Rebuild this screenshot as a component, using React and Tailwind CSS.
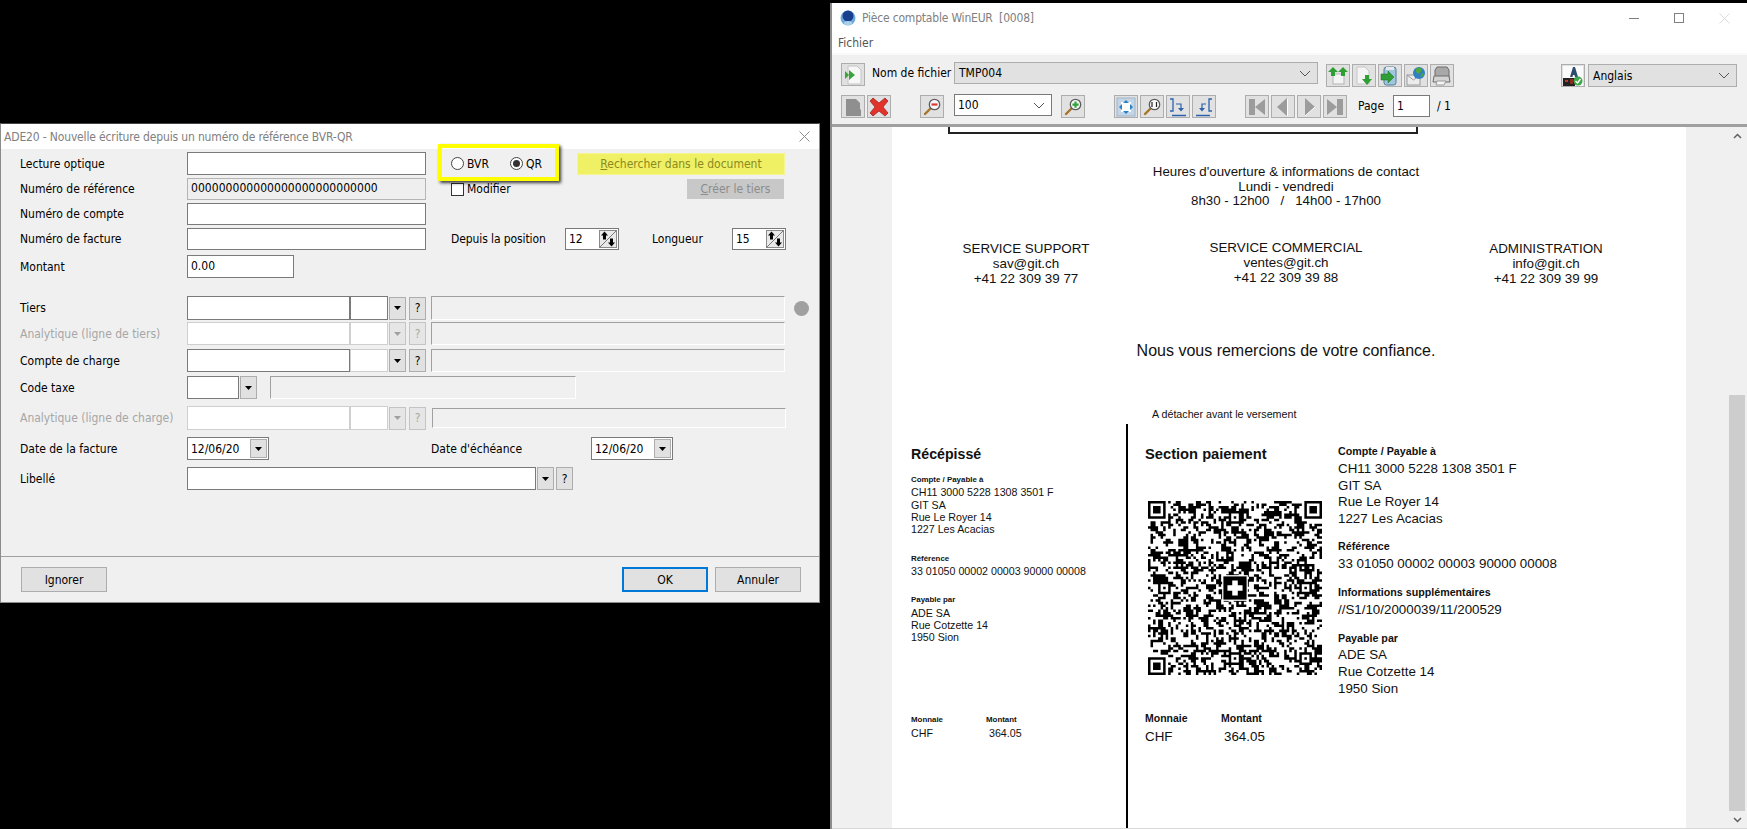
import React from "react";

// pseudo-random QR matrix, 69 modules
function buildQr() {
  const n = 69;
  let seed = 7331;
  const next = () => {
    seed = (seed * 1103515245 + 12345) & 0x7fffffff;
    return (seed >> 12) % 100;
  };
  const m = [];
  for (let y = 0; y < n; y++) {
    const row = [];
    for (let x = 0; x < n; x++) {
      const prev = x > 0 ? row[x - 1] : 0;
      const up = y > 0 ? m[y - 1][x] : 0;
      row.push(next() < 34 + prev * 13 + up * 13 ? 1 : 0);
    }
    m.push(row);
  }
  const put = (ox, oy, size, fn) => {
    for (let y = 0; y < size; y++) for (let x = 0; x < size; x++) m[oy + y][ox + x] = fn(x, y);
  };
  const finder = (x, y) => {
    const d = Math.max(Math.abs(x - 3), Math.abs(y - 3));
    return d === 3 || d <= 1 ? 1 : 0;
  };
  const align = (x, y) => {
    const d = Math.max(Math.abs(x - 2), Math.abs(y - 2));
    return d === 2 || d === 0 ? 1 : 0;
  };
  [[6, 34], [34, 6], [34, 62], [62, 34], [34, 34], [62, 62], [62, 6], [6, 62]].forEach(([cx, cy]) => {
    if ((cx < 10 && cy < 10) || (cx > 60 && cy < 10) || (cx < 10 && cy > 60)) return;
    put(cx - 2, cy - 2, 5, align);
  });
  put(0, 0, 8, () => 0);
  put(n - 8, 0, 8, () => 0);
  put(0, n - 8, 8, () => 0);
  put(0, 0, 7, finder);
  put(n - 7, 0, 7, finder);
  put(0, n - 7, 7, finder);
  let d = "";
  for (let y = 0; y < n; y++) for (let x = 0; x < n; x++) if (m[y][x]) d += `M${x} ${y}h1v1h-1z`;
  return d;
}
const qrPath = buildQr();

function QrCode() {
  return (
    <svg viewBox="0 0 69 69" className="w-[176px] h-[174px] block ml-[2px] blur-[0.3px]">
      <path d={qrPath} fill="#000" />
      <rect x="29.4" y="29.4" width="10.2" height="10.2" fill="#fff" />
      <rect x="29.9" y="29.9" width="9.2" height="9.2" fill="#000" />
      <path d="M33.4 31.5h2.2v1.900h1.900v2.200h-1.900v1.900h-2.200v-1.900h-1.900v-2.200h1.900z" fill="#fff" />
    </svg>
  );
}

function Caret({ dim }) {
  return (
    <svg width="7" height="4" viewBox="0 0 7 4">
      <path d="M0 0h7L3.5 4z" fill={dim ? "#a0a0a0" : "#000"} />
    </svg>
  );
}

function Chevron() {
  return (
    <svg width="12" height="7" viewBox="0 0 12 7" className="shrink-0">
      <path d="M1 1l5 5 5-5" fill="none" stroke="#555" strokeWidth="1" />
    </svg>
  );
}

function SmallBtn({ dim, children, className = "" }) {
  return (
    <div className={`w-[17px] h-[23px] border flex items-center justify-center ${dim ? "bg-[#e6e6e6] border-[#c4c4c4] text-[#a6a6a6]" : "bg-[#e1e1e1] border-[#adadad]"} ${className}`}>
      {children}
    </div>
  );
}

function Input({ className = "", children }) {
  return (
    <div className={`bg-white border border-[#7a7a7a] pl-[3px] leading-[20px] h-full ${className}`}>{children}</div>
  );
}

function Sunken({ className = "" }) {
  return <div className={`border border-t-[#a0a0a0] border-l-[#a0a0a0] border-r-white border-b-white h-full ${className}`} />;
}

function Row({ mt, h, label, dim, children }) {
  return (
    <div className={`flex items-center ${mt} ${h}`}>
      <div className={`w-[186px] pl-[19px] shrink-0 ${dim ? "text-[#a6a6a6]" : ""}`}>{label}</div>
      {children}
    </div>
  );
}

function Lookup({ dim, first }) {
  const line = dim ? "border-[#cfcfcf]" : "border-[#7a7a7a]";
  return (
    <>
      <div className={`w-[163px] h-full bg-white border ${line}`} />
      <div className={`w-[38px] h-full bg-white border ${first ? "border-[#7a7a7a]" : "border-[#cfcfcf]"}`} />
      <SmallBtn dim={dim} className="ml-[1px]"><Caret dim={dim} /></SmallBtn>
      <SmallBtn dim={dim} className="ml-[3px]">?</SmallBtn>
    </>
  );
}

function DateField({ className = "" }) {
  return (
    <div className={`w-[82px] h-full bg-white border border-[#7a7a7a] flex items-center pl-[3px] justify-between pr-[1px] ${className}`}>
      <span>12/06/20</span>
      <div className="w-[17px] h-[19px] bg-[#e1e1e1] border border-[#adadad] flex items-center justify-center"><Caret /></div>
    </div>
  );
}

function Spin({ value, className = "" }) {
  return (
    <div className={`w-[54px] h-full bg-white border border-[#7a7a7a] flex items-center pl-[3px] justify-between pr-[1px] ${className}`}>
      <span>{value}</span>
      <svg width="18" height="18" viewBox="0 0 18 18">
        <rect x="0.5" y="0.5" width="17" height="17" fill="#e9e9e9" stroke="#8a8a8a" />
        <path d="M0.5 17.5L17.5 0.5" stroke="#777" />
        <path d="M5.5 1.5L9 5.5H7v4H4v-4H2z" fill="#000" />
        <path d="M12.5 16.5L9 12.5h2v-4h3v4h2z" fill="#000" />
      </svg>
    </div>
  );
}

function DialogButton({ children, className = "" }) {
  return (
    <div className={`w-[86px] h-[25px] bg-[#e1e1e1] border border-[#adadad] flex items-center justify-center ${className}`}>{children}</div>
  );
}

function Dialog() {
  return (
    <div className="absolute left-0 top-[123px] w-[820px] h-[480px] bg-[#f0f0f0] border border-[#8c8c8c] border-t-[#444] flex flex-col text-[12px] text-black font-['DejaVu_Sans_Condensed','Noto_Sans',sans-serif]">
      <div className="h-[25px] bg-white flex items-center justify-between pl-[3px] pr-[9px] text-[#808080] shrink-0 tracking-[-0.15px]">
        <span>ADE20 - Nouvelle écriture depuis un numéro de référence BVR-QR</span>
        <svg width="11" height="11" viewBox="0 0 11 11"><path d="M0.5 0.5l10 10M10.5 0.5l-10 10" stroke="#8c8c8c" /></svg>
      </div>

      <div className="flex-1 flex flex-col pt-[3px]">
        <Row mt="" h="h-[23px]" label="Lecture optique">
          <Input className="w-[239px]" />
          <div className="ml-[25px] flex items-center w-[126px]">
            <span className="w-[13px] h-[13px] rounded-full border border-[#444] bg-white" />
            <span className="ml-[3px] w-[43px]">BVR</span>
            <span className="w-[13px] h-[13px] rounded-full border border-[#444] bg-white flex items-center justify-center">
              <span className="w-[7px] h-[7px] rounded-full bg-[#333]" />
            </span>
            <span className="ml-[3px]">QR</span>
          </div>
          <div className="w-[208px] h-[22px] bg-[#f0f064] border border-[#f5f590] flex items-center justify-center text-[#8a8a1e]"><span><u>R</u>echercher dans le document</span></div>
        </Row>
        <Row mt="mt-[3px]" h="h-[22px]" label="Numéro de référence">
          <div className="w-[239px] h-full border border-[#b4b4b4] bg-[#efefef] pl-[3px] leading-[19px] tracking-[0.05px]">000000000000000000000000000</div>
          <div className="ml-[25px] flex items-center w-[236px]">
            <span className="w-[13px] h-[13px] border border-[#333] bg-white" />
            <span className="ml-[3px]">Modifier</span>
          </div>
          <div className="w-[97px] h-[20px] bg-[#c8c8c8] flex items-center justify-center text-[#8c8c8c]"><span><u>C</u>réer le tiers</span></div>
        </Row>
        <Row mt="mt-[3px]" h="h-[22px]" label="Numéro de compte">
          <Input className="w-[239px]" />
        </Row>
        <Row mt="mt-[3px]" h="h-[22px]" label="Numéro de facture">
          <Input className="w-[239px]" />
          <span className="ml-[25px] w-[114px] tracking-[-0.1px]">Depuis la position</span>
          <Spin value="12" />
          <span className="ml-[33px] w-[80px]">Longueur</span>
          <Spin value="15" />
        </Row>
        <Row mt="mt-[5px]" h="h-[23px]" label="Montant">
          <Input className="w-[107px]">0.00</Input>
        </Row>

        <Row mt="mt-[18px]" h="h-[24px]" label="Tiers">
          <Lookup first />
          <Sunken className="ml-[5px] w-[354px]" />
          <span className="ml-[9px] w-[15px] h-[15px] rounded-full bg-[#a0a0a0]" />
        </Row>
        <Row mt="mt-[2px]" h="h-[23px]" label="Analytique (ligne de tiers)" dim>
          <Lookup dim />
          <Sunken className="ml-[5px] w-[354px]" />
        </Row>
        <Row mt="mt-[4px]" h="h-[23px]" label="Compte de charge">
          <Lookup />
          <Sunken className="ml-[5px] w-[354px]" />
        </Row>
        <Row mt="mt-[4px]" h="h-[23px]" label="Code taxe">
          <div className="w-[52px] h-full bg-white border border-[#7a7a7a]" />
          <SmallBtn className="ml-[1px]"><Caret /></SmallBtn>
          <Sunken className="ml-[13px] w-[306px]" />
        </Row>
        <Row mt="mt-[7px]" h="h-[24px]" label="Analytique (ligne de charge)" dim>
          <Lookup dim />
          <Sunken className="ml-[6px] w-[354px] !h-[20px]" />
        </Row>
        <Row mt="mt-[7px]" h="h-[23px]" label="Date de la facture">
          <DateField />
          <span className="ml-[162px] w-[160px]">Date d'échéance</span>
          <DateField />
        </Row>
        <Row mt="mt-[7px]" h="h-[23px]" label="Libellé">
          <Input className="w-[349px]" />
          <SmallBtn className="ml-[1px]"><Caret /></SmallBtn>
          <SmallBtn className="ml-[2px]">?</SmallBtn>
        </Row>
      </div>

      <div className="h-[46px] border-t border-[#a0a0a0] flex items-start pt-[10px] pl-[20px] pr-[18px] shrink-0">
        <DialogButton>Ignorer</DialogButton>
        <DialogButton className="ml-auto !border-2 !border-[#0078d7]">OK</DialogButton>
        <DialogButton className="ml-[7px]">Annuler</DialogButton>
      </div>

      {/* annotation frame drawn over the dialog */}
      <div className="absolute left-[437px] top-[20px] w-[121px] h-[37px] border-[4px] border-[#ffff00] shadow-[2px_2px_3px_rgba(0,0,0,0.75)]" />
    </div>
  );
}

function ToolBtn({ children, className = "", w = "w-[24px]" }) {
  return (
    <div className={`${w} h-[23px] bg-[#e1e1e1] border border-[#adadad] flex items-center justify-center shrink-0 ${className}`}>{children}</div>
  );
}

const Ic = ({ children }) => <svg width="20" height="20" viewBox="0 0 20 20">{children}</svg>;

const Handle = () => <path d="M9 11l-6 6" stroke="#a8742a" strokeWidth="2.4" strokeLinecap="round" />;
const Lens = () => <circle cx="12.5" cy="7.5" r="5.2" fill="#fafafa" stroke="#5c5c5c" strokeWidth="1.3" />;

const icons = {
  openDoc: (
    <Ic>
      <path d="M5 1h9l4 4v14H5z" fill="#f7f7f7" stroke="#c4c4c4" />
      <path d="M2 6l4 4-4 4zM6 5l6 5-6 5z" fill="#3aa43a" />
    </Ic>
  ),
  grayDoc: (
    <Ic>
      <path d="M3 2h10l4 4v6l1 1v6H3z" fill="#8f8f8f" />
    </Ic>
  ),
  del: (
    <Ic>
      <path d="M4 1l6 5 6-5 3 3-5 6 5 6-3 3-6-5-6 5-3-3 5-6-5-6z" fill="#e2332b" stroke="#9e2b26" strokeWidth="0.8" />
    </Ic>
  ),
  zoomOut: (
    <Ic>
      <Handle />
      <Lens />
      <rect x="9.5" y="6.4" width="6" height="2.2" fill="#d93a32" />
    </Ic>
  ),
  zoomIn: (
    <Ic>
      <Handle />
      <Lens />
      <path d="M11.4 4.5h2.2v2h2v2.2h-2v2h-2.2v-2h-2V6.500h2z" fill="#2fa53a" />
    </Ic>
  ),
  fit: (
    <Ic>
      <rect x="1" y="1" width="18" height="18" fill="#c4d6e6" stroke="#9db4c8" />
      <rect x="5" y="5" width="10" height="10" fill="#fff" />
      <path d="M10 3l3 3H7zM10 17l-3-3h6zM3 10l3-3v6zM17 10l-3 3V7z" fill="#2a82c4" />
    </Ic>
  ),
  actual: (
    <Ic>
      <Handle />
      <Lens />
      <path d="M10 5v5M12.500 6v0M12.500 8.500v0M14.500 5v5" stroke="#222" strokeWidth="1.200" />
    </Ic>
  ),
  cropRight: (
    <Ic>
      <path d="M2 2h3v12H2M4 18.500h14" fill="none" stroke="#2c62ad" strokeWidth="1.300" />
      <path d="M8 7h5v5" fill="none" stroke="#2c62ad" strokeWidth="1.200" />
      <path d="M10 11h6l-3 3.500z" fill="#2c62ad" />
    </Ic>
  ),
  cropLeft: (
    <Ic>
      <path d="M18 2h-3v12h3M2 18.500h14" fill="none" stroke="#2c62ad" strokeWidth="1.300" />
      <path d="M12 7H8v5" fill="none" stroke="#2c62ad" strokeWidth="1.200" />
      <path d="M5 11h6l-3 3.500z" fill="#2c62ad" />
    </Ic>
  ),
  first: (
    <Ic>
      <path d="M2 2h6v16H2zM8 10l10-8v16z" fill="#9c9c9c" />
    </Ic>
  ),
  prev: (
    <Ic>
      <path d="M4 10l10-9v18z" fill="#9c9c9c" />
      <path d="M14.500 2v17" stroke="#fff" />
    </Ic>
  ),
  next: (
    <Ic>
      <path d="M16 10L6 1v18z" fill="#9c9c9c" />
      <path d="M16 10L6 19" stroke="#fff" />
    </Ic>
  ),
  last: (
    <Ic>
      <path d="M18 2h-6v16h6zM12 10L2 2v16z" fill="#9c9c9c" />
    </Ic>
  ),
  upload: (
    <Ic>
      <rect x="5" y="8" width="11" height="10" fill="#f4f4f4" stroke="#b5b5b5" />
      <path d="M5 1l5 5H7v4H3V6H0zM15 1l5 5h-3v4h-4V6h-3z" fill="#2f9e35" />
    </Ic>
  ),
  download: (
    <Ic>
      <path d="M3 1h8l4 4v13H3z" fill="#f4f4f4" stroke="#c6c6c6" />
      <path d="M11 9h4v4h3l-5 6-5-6h3z" fill="#2f9e35" />
    </Ic>
  ),
  jar: (
    <Ic>
      <rect x="4" y="1" width="12" height="18" rx="2.500" fill="#9fc6dc" stroke="#4d7f9c" />
      <rect x="6" y="1" width="8" height="3" fill="#e8e8e8" />
      <path d="M1 8h7V5l6 6-6 6v-3H1z" fill="#2f9e35" stroke="#1d6e25" strokeWidth="0.500" />
    </Ic>
  ),
  mail: (
    <Ic>
      <rect x="1" y="9" width="13" height="10" fill="#ececec" stroke="#9a9a9a" />
      <path d="M1 9l6.500 5L14 9" fill="none" stroke="#9a9a9a" />
      <circle cx="13" cy="7" r="6" fill="#2f7fc4" />
      <path d="M10 3c2-2 5-1 6 0l-1 3-3 2-2-2zM14 10l3-3 1 1-2 3z" fill="#4fa63b" />
    </Ic>
  ),
  printer: (
    <Ic>
      <path d="M5 1h10l2 3v9H3V4z" fill="#a8a8a8" stroke="#6c6c6c" />
      <path d="M2 10h15l1 6H1z" fill="#d4d4d4" stroke="#6c6c6c" />
      <path d="M5 15h9l-2 4H4z" fill="#f4f4f4" stroke="#9a9a9a" />
    </Ic>
  ),
  lang: (
    <Ic>
      <rect width="20" height="20" fill="#fafafa" />
      <path d="M7 11l3-10h2l3 10h-3l-.5-2h-1.500l-.5 2z" fill="#2c4d6e" />
      <rect x="0" y="12" width="12" height="8" fill="#222" />
      <rect x="2" y="14" width="3" height="2" fill="#c43a2a" />
      <rect x="7" y="13" width="3" height="5" fill="#8a2a1e" />
      <circle cx="15" cy="15" r="4.500" fill="#3fa84a" />
      <path d="M12.500 15l2 2 3-4" fill="none" stroke="#fff" strokeWidth="1.300" />
    </Ic>
  ),
};

function DocWindow() {
  return (
    <div className="absolute left-[830px] top-[3px] w-[917px] h-[826px] bg-white border-l-2 border-[#8c8c8c] flex flex-col text-[12px] font-['DejaVu_Sans_Condensed','Noto_Sans',sans-serif] text-black">
      <div className="h-[30px] flex items-center shrink-0 pl-[8px] pr-[17px]">
        <svg width="16" height="16" viewBox="0 0 16 16">
          <circle cx="8" cy="8" r="7.500" fill="#6faad6" />
          <circle cx="8" cy="6" r="5.500" fill="#1a3f8f" />
          <ellipse cx="8" cy="13" rx="4" ry="2" fill="#a8d2ec" />
        </svg>
        <span className="ml-[6px] text-[#808080] whitespace-pre tracking-[-0.2px]">Pièce comptable WinEUR  [0008]</span>
        <svg width="10" height="1" viewBox="0 0 10 1" className="ml-auto"><rect width="10" height="1" fill="#808080" /></svg>
        <span className="ml-[35px] w-[10px] h-[10px] border border-[#808080]" />
        <svg width="11" height="11" viewBox="0 0 11 11" className="ml-[35px]"><path d="M0.5 0.5l10 10M10.5 0.5l-10 10" stroke="#dcdcdc" /></svg>
      </div>
      <div className="h-[20px] flex items-center pl-[6px] shrink-0 text-[#555]">Fichier</div>

      <div className="h-[74px] bg-[#f0f0f0] border-t-2 border-[#fafafa] border-b-[3px] border-b-[#a0a0a0] shrink-0 flex flex-col">
        <div className="flex items-start h-[23px] mt-[8px] pl-[9px]">
          <ToolBtn>{icons.openDoc}</ToolBtn>
          <span className="ml-[7px] w-[82px] whitespace-nowrap leading-[21px]">Nom de fichier</span>
          <div className="w-[364px] h-[22px] -mt-[1px] bg-[#e1e1e1] border border-[#adadad] flex items-center justify-between pl-[4px] pr-[6px]">
            <span>TMP004</span><Chevron />
          </div>
          <ToolBtn className="ml-[8px] mt-[1px]">{icons.upload}</ToolBtn>
          <ToolBtn className="ml-[2px] mt-[1px]">{icons.download}</ToolBtn>
          <ToolBtn className="ml-[2px] mt-[1px]">{icons.jar}</ToolBtn>
          <ToolBtn className="ml-[2px] mt-[1px]">{icons.mail}</ToolBtn>
          <ToolBtn className="ml-[2px] mt-[1px]">{icons.printer}</ToolBtn>
          <ToolBtn className="ml-[107px] mt-[1px]">{icons.lang}</ToolBtn>
          <div className="ml-[3px] mt-[1px] w-[149px] h-[23px] bg-[#e1e1e1] border border-[#adadad] flex items-center justify-between pl-[4px] pr-[6px]">
            <span>Anglais</span><Chevron />
          </div>
        </div>
        <div className="flex items-start h-[23px] mt-[9px] pl-[9px]">
          <ToolBtn>{icons.grayDoc}</ToolBtn>
          <ToolBtn className="ml-[2px]">{icons.del}</ToolBtn>
          <ToolBtn className="ml-[29px]">{icons.zoomOut}</ToolBtn>
          <div className="ml-[10px] -mt-[1px] w-[98px] h-[22px] bg-white border border-[#7a7a7a] flex items-center justify-between pl-[3px] pr-[6px]">
            <span>100</span><Chevron />
          </div>
          <ToolBtn className="ml-[9px]">{icons.zoomIn}</ToolBtn>
          <ToolBtn className="ml-[29px]">{icons.fit}</ToolBtn>
          <ToolBtn className="ml-[2px]">{icons.actual}</ToolBtn>
          <ToolBtn className="ml-[2px]">{icons.cropRight}</ToolBtn>
          <ToolBtn className="ml-[2px]">{icons.cropLeft}</ToolBtn>
          <ToolBtn className="ml-[29px]">{icons.first}</ToolBtn>
          <ToolBtn className="ml-[2px]">{icons.prev}</ToolBtn>
          <ToolBtn className="ml-[2px]">{icons.next}</ToolBtn>
          <ToolBtn className="ml-[2px]">{icons.last}</ToolBtn>
          <span className="ml-[11px] w-[35px] leading-[22px]">Page</span>
          <div className="w-[37px] h-[22px] bg-white border border-[#7a7a7a] pl-[3px] leading-[20px]">1</div>
          <span className="ml-[7px] leading-[22px]">/ 1</span>
        </div>
      </div>

      <div className="flex-1 flex min-h-0 bg-[#f0f0f0] border-b border-[#d8d8d8]">
        <div className="w-[60px] shrink-0" />
        <InvoicePage />
        <div className="w-[43px] shrink-0" />
        <div className="w-[16px] flex flex-col bg-[#f0f0f0] shrink-0">
          <div className="h-[17px] flex items-center justify-center">
            <svg width="9" height="6" viewBox="0 0 9 6"><path d="M1 5l3.500-3.500L8 5" fill="none" stroke="#606060" strokeWidth="1.500" /></svg>
          </div>
          <div className="mt-[251px] flex-1 bg-[#cdcdcd]" />
          <div className="h-[17px] flex items-center justify-center">
            <svg width="9" height="6" viewBox="0 0 9 6"><path d="M1 1l3.500 3.500L8 1" fill="none" stroke="#606060" strokeWidth="1.500" /></svg>
          </div>
        </div>
      </div>
    </div>
  );
}

const Head = ({ className = "", children }) => <div className={`font-bold whitespace-nowrap ${className}`}>{children}</div>;

function InvoicePage() {
  return (
    <div className="w-[794px] shrink-0 bg-white font-['Liberation_Sans',Arial,sans-serif] text-[#111] overflow-hidden">
      <div className="ml-[56px] w-[470px] h-[7px] border-x-2 border-b-2 border-[#222]" />

      <div className="mt-[31px] w-[788px] text-center text-[13.300px] leading-[14.700px]">
        <div>Heures d'ouverture &amp; informations de contact</div>
        <div>Lundi - vendredi</div>
        <div>8h30 - 12h00 &nbsp; / &nbsp; 14h00 - 17h00</div>
      </div>

      <div className="mt-[33px] ml-[4px] flex text-center text-[13.400px] leading-[14.700px]">
        <div className="w-[260px]">
          <div>SERVICE SUPPORT</div>
          <div>sav@git.ch</div>
          <div>+41 22 309 39 77</div>
        </div>
        <div className="w-[260px] -mt-[1px]">
          <div>SERVICE COMMERCIAL</div>
          <div>ventes@git.ch</div>
          <div>+41 22 309 39 88</div>
        </div>
        <div className="w-[260px]">
          <div>ADMINISTRATION</div>
          <div>info@git.ch</div>
          <div>+41 22 309 39 99</div>
        </div>
      </div>

      <div className="mt-[55px] w-[788px] text-center text-[16px] leading-[20px]">Nous vous remercions de votre confiance.</div>
      <div className="mt-[47px] ml-[260px] text-[10.700px] leading-[12px]">A détacher avant le versement</div>

      <div className="mt-[4px] flex h-[404px]">
        <div className="w-[234px] pl-[19px] pt-[22px] shrink-0">
          <Head className="text-[14.200px] leading-[16px]">Récépissé</Head>
          <Head className="mt-[12.500px] text-[7.900px] leading-[9px]">Compte / Payable à</Head>
          <div className="mt-[2.500px] text-[10.660px] leading-[12.300px]">
            <div>CH11 3000 5228 1308 3501 F</div>
            <div>GIT SA</div>
            <div>Rue Le Royer 14</div>
            <div>1227 Les Acacias</div>
          </div>
          <Head className="mt-[18.500px] text-[7.900px] leading-[9px]">Référence</Head>
          <div className="mt-[2.500px] text-[10.660px] leading-[12.300px]">33 01050 00002 00003 90000 00008</div>
          <Head className="mt-[17.500px] text-[7.900px] leading-[9px]">Payable par</Head>
          <div className="mt-[2.500px] text-[10.660px] leading-[12.300px]">
            <div>ADE SA</div>
            <div>Rue Cotzette 14</div>
            <div>1950 Sion</div>
          </div>
          <div className="mt-[71.500px] flex text-[7.900px] leading-[9px] font-bold">
            <div className="w-[75px]">Monnaie</div>
            <div>Montant</div>
          </div>
          <div className="mt-[2.500px] flex text-[10.660px] leading-[12.300px]">
            <div className="w-[78px]">CHF</div>
            <div>364.05</div>
          </div>
        </div>

        <div className="w-[2px] bg-black shrink-0" />

        <div className="w-[210px] pl-[17px] pt-[22px] shrink-0">
          <Head className="text-[14.700px] leading-[16px]">Section paiement</Head>
          <div className="mt-[39px]"><QrCode /></div>
          <div className="mt-[38px] flex text-[10.500px] leading-[11px] font-bold">
            <div className="w-[76px]">Monnaie</div>
            <div>Montant</div>
          </div>
          <div className="mt-[4.500px] flex text-[13.350px] leading-[16px]">
            <div className="w-[79px]">CHF</div>
            <div>364.05</div>
          </div>
        </div>

        <div className="pt-[21px] text-[13.350px] leading-[16.700px]">
          <Head className="text-[10.700px] leading-[12px]">Compte / Payable à</Head>
          <div className="mt-[3.600px]">
            <div>CH11 3000 5228 1308 3501 F</div>
            <div>GIT SA</div>
            <div>Rue Le Royer 14</div>
            <div>1227 Les Acacias</div>
          </div>
          <Head className="mt-[12.600px] text-[10.700px] leading-[12px]">Référence</Head>
          <div className="mt-[3.600px]">33 01050 00002 00003 90000 00008</div>
          <Head className="mt-[13.700px] text-[10.700px] leading-[12px]">Informations supplémentaires</Head>
          <div className="mt-[3.600px]">//S1/10/2000039/11/200529</div>
          <Head className="mt-[13.700px] text-[10.700px] leading-[12px]">Payable par</Head>
          <div className="mt-[3px]">
            <div>ADE SA</div>
            <div>Rue Cotzette 14</div>
            <div>1950 Sion</div>
          </div>
        </div>
      </div>
    </div>
  );
}

export default function App() {
  return (
    <div className="relative w-[1747px] h-[829px] bg-black overflow-hidden">
      <Dialog />
      <DocWindow />
    </div>
  );
}
